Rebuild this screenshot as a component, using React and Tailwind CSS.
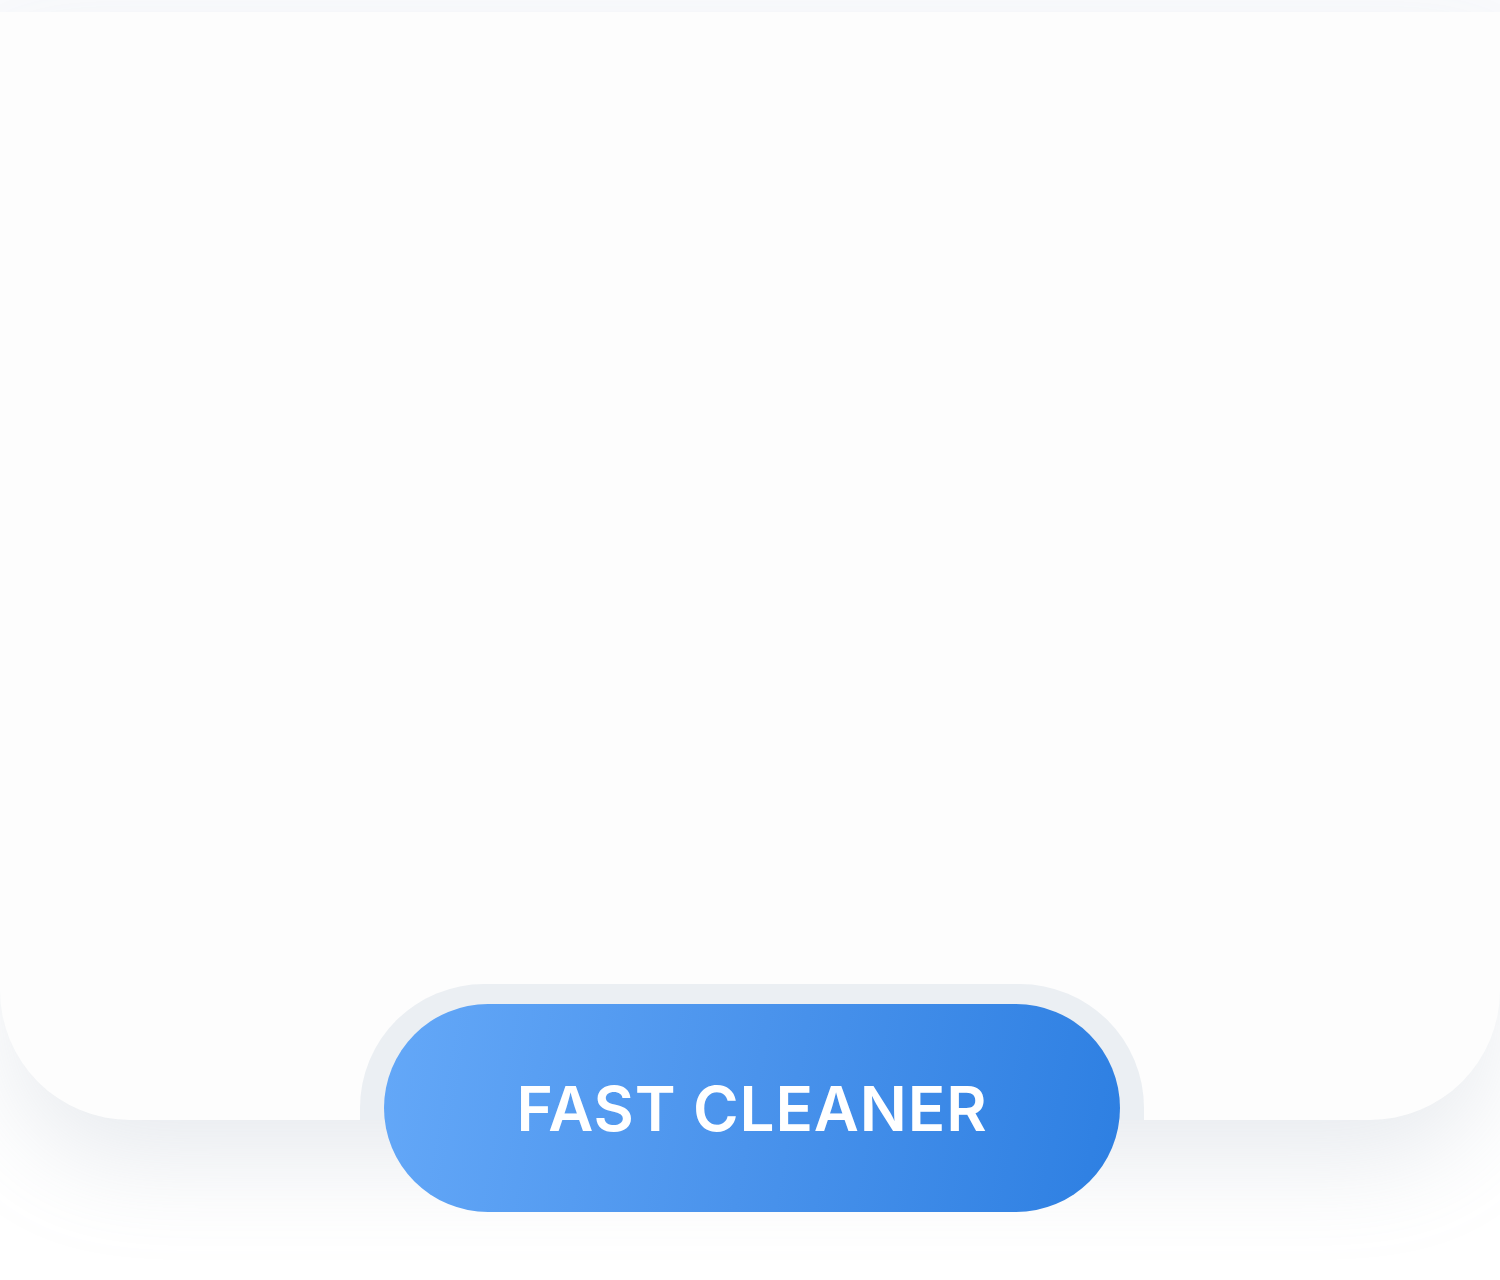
export default function App() {
  return (
    <main className="relative h-[1280px] w-full overflow-hidden bg-white">
      <div className="h-[12px] bg-[#f9fafc]" />

      <section className="relative z-10 h-[1108px] rounded-b-[130px] bg-[#fdfdfd] shadow-[0_50px_100px_-10px_rgba(148,163,184,0.22)]" />

      <div className="absolute left-0 right-0 top-[984px] z-20 flex justify-center pl-[4px]">
        <div className="relative h-[248px] w-[784px]">
          <div className="h-[136px] w-full rounded-t-[124px] bg-[#ebeff3]" />
          <button className="absolute left-[24px] top-[20px] flex h-[208px] w-[736px] items-center justify-center rounded-full bg-[linear-gradient(100deg,#64a8f8_0%,#4a93ec_50%,#2d7fe2_100%)]">
            <span className="font-['Inter','Liberation_Sans',sans-serif] text-[62px] font-semibold tracking-[0.014em] text-white">
              FAST CLEANER
            </span>
          </button>
        </div>
      </div>
    </main>
  );
}
